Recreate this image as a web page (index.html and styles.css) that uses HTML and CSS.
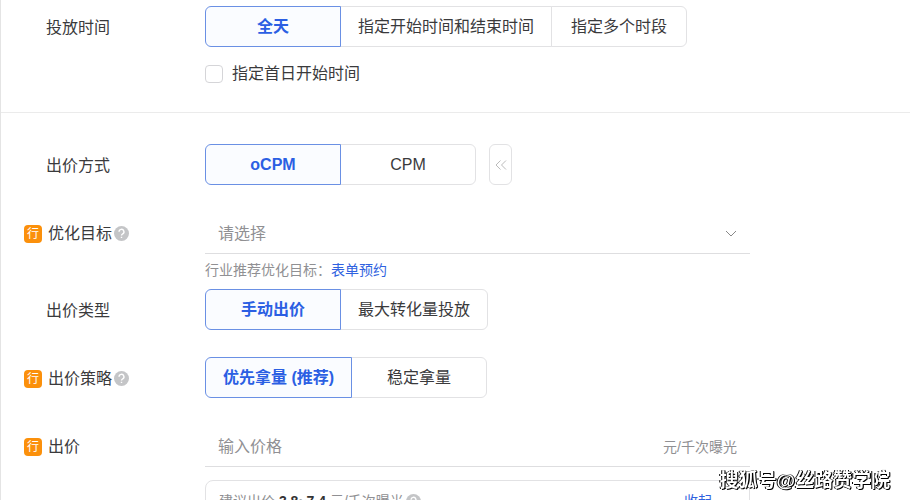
FILE: index.html
```html
<!DOCTYPE html>
<html lang="zh-CN">
<head>
  <meta charset="UTF-8" />
  <meta name="viewport" content="width=device-width, initial-scale=1.0"/>
  <title>投放时间与出价</title>
  <link rel="stylesheet" href="styles.css">
</head>
<body>
  <form class="page">
    <section class="section section-time">
      <div class="row">
        <div class="row-label">投放时间</div>
        <div class="row-content">
          <div class="segment" role="group" aria-label="投放时间">
            <button type="button" class="segment-item active" aria-pressed="true">全天</button>
            <button type="button" class="segment-item" aria-pressed="false">指定开始时间和结束时间</button>
            <button type="button" class="segment-item" aria-pressed="false">指定多个时段</button>
          </div>
          <div class="checkbox-container">
            <input type="checkbox" id="firstDay">
            <label for="firstDay">指定首日开始时间</label>
          </div>
        </div>
      </div>
    </section>

    <section class="section section-bid">
      <div class="row">
        <div class="row-label">出价方式</div>
        <div class="row-content with-toggle">
          <div class="segment" role="group" aria-label="出价方式">
            <button type="button" class="segment-item active" aria-pressed="true">oCPM</button>
            <button type="button" class="segment-item" aria-pressed="false">CPM</button>
          </div>
          <button type="button" class="toggle" aria-label="收起">
            <svg width="12" height="12" viewBox="0 0 12 12"><path d="M5.5 1.500 1 6l4.500 4.500M11 1.500 6.500 6l4.500 4.500"/></svg>
          </button>
        </div>
      </div>

      <div class="row row-goal">
        <div class="row-label">
          <span class="badge">行</span>
          <label for="goal">优化目标</label>
          <svg class="help" viewBox="0 0 16 16"><circle cx="8" cy="8" r="8"/><path d="M5.400 6.200a2.600 2.600 0 1 1 3.900 2.200c-.9.6-1.300.8-1.300 1.600M8 11.400v1.500"/></svg>
        </div>
        <div class="row-content">
          <div class="field">
            <select id="goal">
              <option>请选择</option>
              <option>表单预约</option>
            </select>
            <svg class="arrow" width="12" height="8" viewBox="0 0 12 8"><path d="M1 1l5 5 5-5"/></svg>
          </div>
          <p class="hint">行业推荐优化目标：<a href="#">表单预约</a></p>
        </div>
      </div>

      <div class="row">
        <div class="row-label">出价类型</div>
        <div class="row-content">
          <div class="segment" role="group" aria-label="出价类型">
            <button type="button" class="segment-item active" aria-pressed="true">手动出价</button>
            <button type="button" class="segment-item" aria-pressed="false">最大转化量投放</button>
          </div>
        </div>
      </div>

      <div class="row">
        <div class="row-label">
          <span class="badge">行</span>
          <span>出价策略</span>
          <svg class="help" viewBox="0 0 16 16"><circle cx="8" cy="8" r="8"/><path d="M5.400 6.200a2.600 2.600 0 1 1 3.900 2.200c-.9.6-1.300.8-1.300 1.600M8 11.400v1.500"/></svg>
        </div>
        <div class="row-content">
          <div class="segment" role="group" aria-label="出价策略">
            <button type="button" class="segment-item active" aria-pressed="true">优先拿量 (推荐)</button>
            <button type="button" class="segment-item" aria-pressed="false">稳定拿量</button>
          </div>
        </div>
      </div>

      <div class="row">
        <div class="row-label">
          <span class="badge">行</span>
          <label for="price">出价</label>
        </div>
        <div class="row-content">
          <div class="field">
            <input type="text" id="price" placeholder="输入价格">
            <span class="unit">元/千次曝光</span>
          </div>
          <div class="suggest">
            <span>建议出价 <b>3.8~7.4</b> 元/千次曝光</span>
            <svg class="help" viewBox="0 0 16 16"><circle cx="8" cy="8" r="8"/><path d="M5.400 6.200a2.600 2.600 0 1 1 3.900 2.200c-.9.6-1.300.8-1.300 1.600M8 11.400v1.500"/></svg>
            <a class="fold" href="#">收起</a>
          </div>
        </div>
      </div>
    </section>
  </form>
  <div class="watermark">搜狐号@丝路赞学院</div>
</body>
</html>
```

FILE: styles.css
```css
* {
  box-sizing: border-box;
}

body {
  margin: 0;
  font-family: "Liberation Sans", "Noto Sans CJK SC", sans-serif;
  font-size: 16px;
  line-height: 24px;
  color: #3a3a3c;
  background-color: #fff;
}

button,
input,
select {
  font: inherit;
  color: inherit;
}

a {
  color: #2f62e0;
  text-decoration: none;
}

.page {
  height: 100vh;
  overflow: hidden;
  border-left: 1px solid #e4e4e4;
}

.section {
  display: flex;
  flex-direction: column;
  gap: 27px;
  padding-left: 23px;
}

.section-time {
  padding-top: 6px;
  padding-bottom: 26px;
  border-bottom: 1px solid #ebebeb;
}

.section-bid {
  padding-top: 31px;
}

.row {
  display: flex;
}

.row-label {
  display: flex;
  align-items: center;
  width: 181px;
  height: 41px;
  padding-top: 2px;
  padding-left: 22px;
}

.row-label:has(.badge) {
  padding-left: 0;
}

.row-content {
  flex: 1;
  max-width: 545px;
}

/* segmented buttons */
.segment {
  display: flex;
}

.segment-item {
  min-width: 136px;
  height: 41px;
  padding: 0 17px;
  background-color: #fff;
  border: 1px solid #e2e2e4;
  cursor: pointer;
}

.segment-item + .segment-item {
  margin-left: -1px;
}

.segment-item:first-child {
  border-radius: 6px 0 0 6px;
}

.segment-item:last-child {
  border-radius: 0 6px 6px 0;
}

.segment-item.active {
  position: relative;
  font-weight: bold;
  color: #2b5fe3;
  background-color: #fafcff;
  border-color: #6a90e4;
}

.with-toggle {
  display: flex;
  gap: 13px;
}

.toggle {
  display: flex;
  align-items: center;
  justify-content: center;
  width: 23px;
  height: 41px;
  padding: 0;
  background-color: #fff;
  border: 1px solid #e2e2e4;
  border-radius: 6px;
}

.toggle svg,
.arrow {
  fill: none;
  stroke: #bbb;
}

.checkbox-container {
  display: flex;
  align-items: center;
  gap: 9px;
  margin-top: 15px;
}

.checkbox-container input {
  appearance: none;
  width: 18px;
  height: 18px;
  margin: 0;
  border: 1px solid #d5d5d8;
  border-radius: 4px;
}

/* label icons */
.badge {
  width: 18px;
  height: 18px;
  margin-right: 6px;
  border-radius: 4px;
  background-color: #fb900b;
  color: #fff;
  font-size: 12px;
  line-height: 18px;
  text-align: center;
}

.help {
  width: 15px;
  height: 15px;
  margin-left: 2px;
  fill: #c4c5c7;
}

.help path {
  fill: none;
  stroke: #fff;
  stroke-width: 1.5;
}

/* underlined fields */
.field {
  display: flex;
  align-items: center;
  height: 42px;
  padding: 3px 13px 0;
  border-bottom: 1px solid #dedee0;
}

.field select,
.field input {
  flex: 1;
  min-width: 0;
  height: 24px;
  padding: 0;
  border: none;
  outline: none;
  background: none;
  appearance: none;
  color: #909093;
}

.field input::placeholder {
  color: #909093;
}

.arrow {
  stroke: #888;
}

.unit {
  font-size: 14px;
  color: #909093;
}

.row-goal {
  margin-bottom: -18px;
}

.hint {
  margin: 6px 0 0;
  font-size: 14px;
  line-height: 20px;
  color: #909093;
}

.suggest {
  display: flex;
  align-items: flex-start;
  height: 80px;
  margin-top: 13px;
  padding: 10px 37px 0 13px;
  border: 1px solid #e2e2e4;
  border-radius: 8px;
  font-size: 14px;
  line-height: 20px;
  color: #909093;
}

.suggest .help {
  margin-top: 3px;
}

.suggest b {
  color: #333;
}

.fold {
  margin-left: auto;
}

.watermark {
  position: fixed;
  right: 20px;
  bottom: 5px;
  font-size: 19px;
  line-height: 28px;
  font-weight: bold;
  color: #fff;
  text-shadow: 1px 1px 0 #000, 1px 0 0 #000, -1px 0 0 #000;
}
```
